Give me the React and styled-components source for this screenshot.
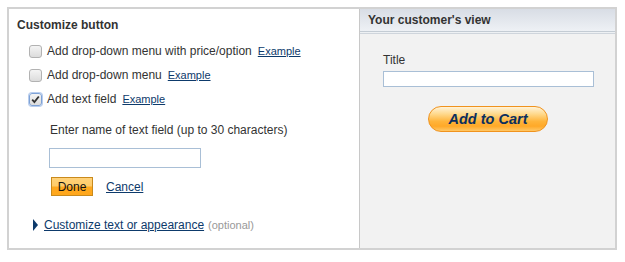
import React from "react";
import styled, { createGlobalStyle } from "styled-components";

const Global = createGlobalStyle`
  html, body { margin: 0; padding: 0; background: #fff; }
  body { font-family: Arial, "Liberation Sans", sans-serif; color: #333; }
`;

const Frame = styled.div`
  margin: 7px 0 0 7px;
  width: 606px;
  height: 239px;
  border: 2px solid #d2d2d2;
  display: grid;
  grid-template-columns: 350px 1fr;
  background: #fff;
`;

const LeftPane = styled.div`
  padding: 8px 0 0 8px;
  display: flex;
  flex-direction: column;
`;

const Heading = styled.div`
  font-weight: bold;
  font-size: 12px;
  color: #333;
  line-height: 16px;
  margin-bottom: 10px;
`;

const OptionList = styled.div`
  display: flex;
  flex-direction: column;
  gap: 8px;
  padding-left: 12px;
`;

const OptionRow = styled.label`
  display: flex;
  align-items: center;
  height: 16px;
  font-size: 12px;
  color: #333;
`;

const Check = styled.span`
  width: 11px;
  height: 11px;
  border: 1px solid ${(p) => (p.$checked ? "#7ea2d6" : "#b2b2b2")};
  box-shadow: ${(p) => (p.$checked ? "0 0 0 1px #b8cdee" : "none")};
  border-radius: 3px;
  background: linear-gradient(#f4f4f4, #dcdcdc);
  margin: 0 5px 0 0;
  display: flex;
  align-items: center;
  justify-content: center;
  flex: none;
`;

const ExampleLink = styled.a`
  font-size: 11px;
  color: #0d3a6b;
  text-decoration: underline;
  margin-left: 6px;
  cursor: pointer;
`;

const SubForm = styled.div`
  padding-left: 33px;
  margin-top: 15px;
  display: flex;
  flex-direction: column;
`;

const FieldLabel = styled.div`
  font-size: 12px;
  color: #333;
  line-height: 16px;
`;

const TextInput = styled.input`
  box-sizing: border-box;
  width: ${(p) => p.$w}px;
  height: ${(p) => p.$h}px;
  margin: ${(p) => p.$mt}px 0 0 ${(p) => p.$ml || 0}px;
  border: 1px solid #a9bfd6;
  background: #fff;
  padding: 0 3px;
  outline: none;
`;

const ButtonRow = styled.div`
  display: flex;
  align-items: center;
  gap: 13px;
  margin-top: 9px;
  padding-left: 1px;
`;

const DoneButton = styled.button`
  width: 42px;
  height: 19px;
  padding: 0;
  font-family: Arial, "Liberation Sans", sans-serif;
  font-size: 12px;
  color: #111;
  border: 1px solid #c98a1c;
  background: linear-gradient(#ffd27a 0%, #ffcc6a 45%, #ffa81e 55%, #ffa71c 100%);
`;

const CancelLink = styled.a`
  font-size: 12px;
  color: #0d3a6b;
  text-decoration: underline;
  cursor: pointer;
`;

const Disclosure = styled.div`
  display: flex;
  align-items: center;
  margin-top: 22px;
  padding-left: 16px;
  font-size: 12px;
`;

const Triangle = styled.span`
  width: 0;
  height: 0;
  border-top: 6px solid transparent;
  border-bottom: 6px solid transparent;
  border-left: 5px solid #0d3a6b;
  margin-right: 6px;
`;

const DisclosureLink = styled.a`
  color: #0d3a6b;
  text-decoration: underline;
  cursor: pointer;
`;

const Optional = styled.span`
  color: #999;
  font-size: 11px;
  margin-left: 4px;
`;

const RightPane = styled.div`
  border-left: 1px solid #c8c8c8;
  background: #f2f2f2;
  display: flex;
  flex-direction: column;
`;

const PaneHeader = styled.div`
  height: 22px;
  padding-left: 8px;
  display: flex;
  align-items: center;
  font-size: 12px;
  font-weight: bold;
  color: #333;
  background: linear-gradient(#d8dde5, #eef1f5);
  border-bottom: 1px solid #c4ccd4;
  box-shadow: 0 1px 0 #eef1f4, 0 2px 0 #cfd5dc;
`;

const Preview = styled.div`
  padding: 20px 0 0 23px;
  display: flex;
  flex-direction: column;
`;

const CartButton = styled.button`
  align-self: flex-start;
  margin: 19px 0 0 45px;
  width: 120px;
  height: 26px;
  border-radius: 13px;
  border: 1px solid #f0931e;
  padding: 0;
  background: linear-gradient(#fff3d8 0%, #ffd88a 30%, #ffb43a 60%, #ffa928 80%, #ffc766 100%);
  font-family: Arial, "Liberation Sans", sans-serif;
  font-size: 14.5px;
  font-weight: bold;
  font-style: italic;
  color: #0c2f5e;
`;

const CheckMark = () => (
  <svg width="9" height="9" viewBox="0 0 9 9">
    <path d="M1.2 4.6 L3.4 7 L7.8 1.5" fill="none" stroke="#333" strokeWidth="1.8" />
  </svg>
);

const options = [
  { label: "Add drop-down menu with price/option", checked: false },
  { label: "Add drop-down menu", checked: false },
  { label: "Add text field", checked: true },
];

export default function App() {
  return (
    <>
      <Global />
      <Frame>
        <LeftPane>
          <Heading>Customize button</Heading>
          <OptionList>
            {options.map((o) => (
              <OptionRow key={o.label}>
                <Check $checked={o.checked}>{o.checked && <CheckMark />}</Check>
                {o.label}
                <ExampleLink>Example</ExampleLink>
              </OptionRow>
            ))}
          </OptionList>
          <SubForm>
            <FieldLabel>Enter name of text field (up to 30 characters)</FieldLabel>
            <TextInput $w={152} $h={20} $mt={10} $ml={-1} />
            <ButtonRow>
              <DoneButton>Done</DoneButton>
              <CancelLink>Cancel</CancelLink>
            </ButtonRow>
          </SubForm>
          <Disclosure>
            <Triangle />
            <DisclosureLink>Customize text or appearance</DisclosureLink>
            <Optional>(optional)</Optional>
          </Disclosure>
        </LeftPane>
        <RightPane>
          <PaneHeader>Your customer's view</PaneHeader>
          <Preview>
            <FieldLabel>Title</FieldLabel>
            <TextInput $w={211} $h={16} $mt={3} />
            <CartButton>Add to Cart</CartButton>
          </Preview>
        </RightPane>
      </Frame>
    </>
  );
}
